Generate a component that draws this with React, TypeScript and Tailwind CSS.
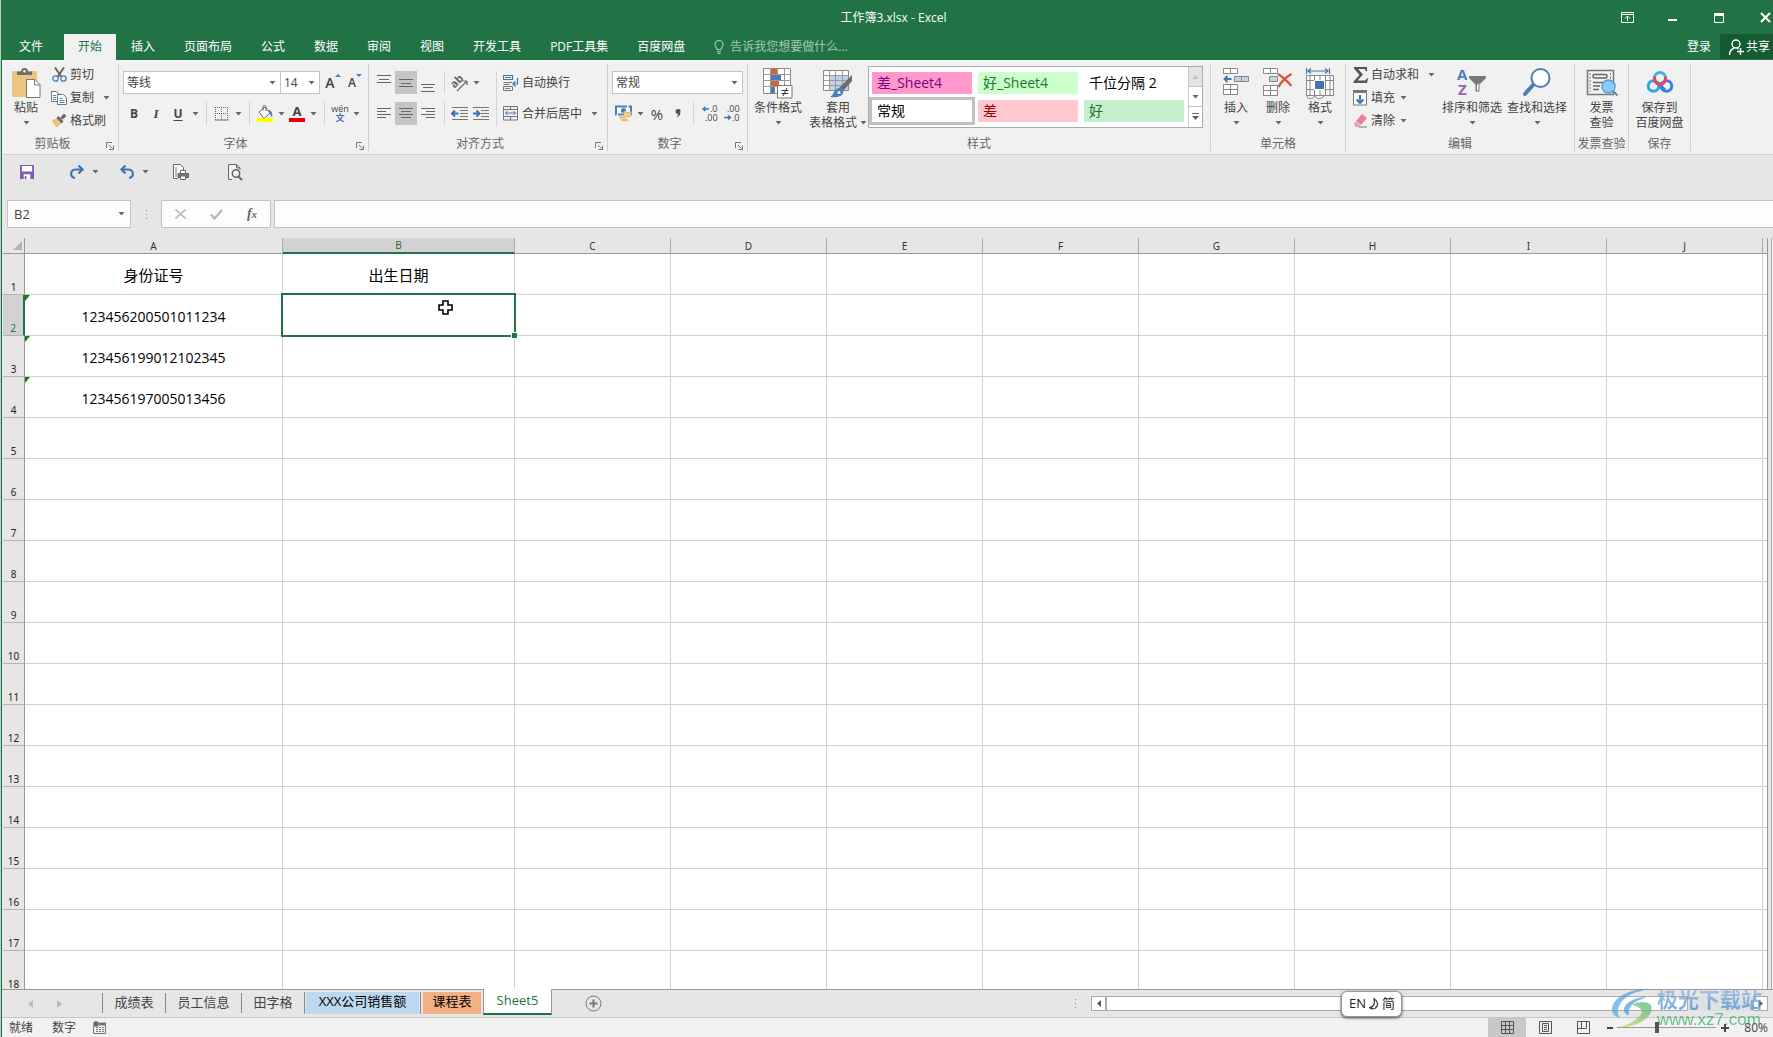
import { useState } from "react";
import type { ReactNode } from "react";

const TABS = ["插入", "页面布局", "公式", "数据", "审阅", "视图", "开发工具", "PDF工具集", "百度网盘"];
const STYLES = [
  { name: "差_Sheet4", cls: "bg-[#ff99cc] text-[#800080]" },
  { name: "好_Sheet4", cls: "bg-[#ccffcc] text-[#1a7a2a]" },
  { name: "千位分隔 2", cls: "bg-white text-black" },
  { name: "常规", cls: "bg-white text-black outline-[3px] outline-[#c0c0c0]" },
  { name: "差", cls: "bg-[#ffc7ce] text-[#9c0006]" },
  { name: "好", cls: "bg-[#c6efce] text-[#1f7030]" },
];
const COLS = ["A", "B", "C", "D", "E", "F", "G", "H", "I", "J"];
const ROWS = Array.from({ length: 18 }, (_, i) => i + 1);
const DATA: Record<string, string> = {
  A1: "身份证号", B1: "出生日期",
  A2: "123456200501011234", A3: "123456199012102345", A4: "123456197005013456",
};

const Arrow = () => (
  <svg width="7" height="4" viewBox="0 0 7 4" className="shrink-0"><path d="M0.5 0h6L3.5 3.5z" fill="#666" /></svg>
);

const Drop = ({ label }: { label: string }) => (
  <button aria-label={label} className="w-3 h-full flex items-center justify-center shrink-0"><Arrow /></button>
);

const Tool = ({ label, on, wide, children }: { label: string; on?: boolean; wide?: boolean; children: ReactNode }) => (
  <button aria-label={label} className={"h-full flex items-center justify-center shrink-0 " + (wide ? "w-[22px] " : "w-5 ") + (on ? "bg-[#c5c5c5]" : "")}>
    {children}
  </button>
);

const Sep = () => <div className="w-px h-full bg-[#d4d4d4] mx-[5px] shrink-0" />;

const Big = ({ label, icon, width, arrow }: { label: string[]; icon: ReactNode; width: string; arrow?: boolean }) => (
  <button className={"flex flex-col items-center pt-1 shrink-0 whitespace-nowrap " + width}>
    <span className="h-[30px] flex items-start justify-center">{icon}</span>
    <span className="mt-0.5 leading-[15px]">{label[0]}</span>
    <span className="h-[15px] leading-[15px] flex items-center gap-[3px]">
      {label[1]}
      {arrow && <Arrow />}
    </span>
  </button>
);

const Small = ({ label, icon }: { label: string; icon: ReactNode }) => (
  <button className="flex items-center gap-[3px] h-full px-0.5 whitespace-nowrap">
    <span className="w-4 flex justify-center">{icon}</span>
    {label}
  </button>
);

const Group = ({ label, width, launcher, children }: { label: string; width: string; launcher?: boolean; children: ReactNode }) => (
  <section aria-label={label} className={"h-[87px] my-1 border-r border-[#d0d0d0] flex flex-col justify-between shrink-0 " + width}>
    <div className="flex h-[70px]">{children}</div>
    <div className="flex h-[14px] leading-[14px] text-[#666]">
      <span className="flex-1 text-center whitespace-nowrap">{label}</span>
      {launcher && (
        <button aria-label={label + "设置"} className="w-4 flex items-end justify-center">
          <svg width="9" height="9" viewBox="0 0 9 9" fill="none" stroke="#777"><path d="M0.5 6V0.5H6M3 3l3.5 3.5M7.5 3.5v4h-4" /></svg>
        </button>
      )}
    </div>
  </section>
);

const Combo = ({ label, value, width }: { label: string; value: string; width: string }) => (
  <div className={"relative h-[23px] shrink-0 " + width}>
    <select aria-label={label} className="appearance-none w-full h-full bg-white border border-[#c3c3c3] pl-[3px] text-[#444] outline-none">
      <option>{value}</option>
    </select>
    <span className="absolute right-[5px] top-[10px] pointer-events-none"><Arrow /></span>
  </div>
);

const Lines = ({ d }: { d: string }) => (
  <svg width="16" height="20" viewBox="0 0 16 20" fill="none" stroke="#666"><path d={d} /></svg>
);

function PasteIcon() {
  return (
    <svg width="30" height="31" viewBox="0 0 30 31">
      <rect x="1" y="3" width="25" height="26" rx="1" fill="#ecc580" />
      <path d="M6 7V3.500h4a3.500 3.500 0 0 1 7 0h4V7z" fill="#6d6d6d" />
      <circle cx="13.500" cy="3.300" r="1.300" fill="#f1f1f1" />
      <path d="M15.500 11.500h8.500l5 5v13h-13.500z" fill="#fff" stroke="#777" />
      <path d="M23.500 11.500v5.500h5.500" fill="none" stroke="#777" />
    </svg>
  );
}

function CutIcon() {
  return (
    <svg width="15" height="15" viewBox="0 0 15 15" fill="none">
      <path d="M3 0.500l6.500 9.500M12 0.500L5.500 10" stroke="#666" strokeWidth="2" />
      <circle cx="3.500" cy="11.500" r="2.700" stroke="#4a7ebb" strokeWidth="1.300" />
      <circle cx="11.500" cy="11.500" r="2.700" stroke="#4a7ebb" strokeWidth="1.300" />
    </svg>
  );
}

function CopyIcon() {
  return (
    <svg width="16" height="14" viewBox="0 0 16 14" stroke="#777" fill="#fff">
      <path d="M0.500 0.500h5l2.500 2.500v7.500h-7.500z" />
      <path d="M6.500 3.500h6l3 3v7h-9z" />
      <path d="M2 4.500h3M2 6.500h3M2 8.500h3M8.500 7.500h3M8.500 9.500h5M8.500 11.500h5" stroke="#4a7ebb" fill="none" />
    </svg>
  );
}

function BrushIcon() {
  return (
    <svg width="16" height="15" viewBox="0 0 16 15">
      <path d="M1 7l5-1.500 4 5L6 14.500c-2-1-4-4-5-7.500z" fill="#ecc07c" />
      <path d="M5.500 5l2-2 5 5.500-2 2z" fill="#666" />
      <path d="M9.500 4.500L13 0.500l2.500 2.500-4 3.500z" fill="#666" />
    </svg>
  );
}

function BucketIcon() {
  return (
    <svg width="18" height="18" viewBox="0 0 18 18" fill="none">
      <path d="M3 7l6-5 5 6-6 5.500z" fill="#fff" stroke="#666" />
      <path d="M7 5.500V2a1.500 1.500 0 0 1 3 0v4" stroke="#666" />
      <path d="M12 5c3 0 5 2.500 4 7.500-1-2-2-3-2.500-4.500z" fill="#4a7ebb" />
      <rect x="1" y="13" width="16" height="4" fill="#ffff00" />
    </svg>
  );
}

function BordersIcon() {
  return (
    <svg width="14" height="14" viewBox="0 0 14 14" fill="none" stroke="#666">
      <path d="M0.500 0v13M6.500 0v13M12.500 0v13M0 0.500h13M0 6.500h13" strokeDasharray="1 1" />
      <path d="M0 13h13.500" />
    </svg>
  );
}

function OrientIcon() {
  return (
    <svg width="18" height="18" viewBox="0 0 18 18" fill="none" className="overflow-visible">
      <text x="0" y="12" transform="rotate(-45 5 9)" fontSize="11" fontWeight="bold" fill="#666" fontFamily="Open Sans">ab</text>
      <path d="M6 17L16 7M16 7v4M16 7h-4" stroke="#666" strokeWidth="1.200" />
    </svg>
  );
}

function IndentIcon({ right }: { right?: boolean }) {
  return (
    <svg width="18" height="15" viewBox="0 0 18 15" fill="none" stroke="#777">
      <path d="M1 1.500h16M9 4.500h8M9 7.500h8M9 10.500h8M1 13.500h16" />
      <path d={right ? "M1 7.500h6M4.500 4.500l3 3-3 3" : "M7.500 7.500h-6M4 4.500l-3 3 3 3"} stroke="#3f74b5" strokeWidth="2" />
    </svg>
  );
}

function WrapIcon() {
  return (
    <svg width="16" height="16" viewBox="0 0 16 16" fill="none" stroke="#777">
      <path d="M0.500 11.500h9v4h-9zM2 2.500h6M0.500 7.500h9M0.500 9.500h6M2 13.500h5" />
      <path d="M0.500 0.500h9v4h-9zM14.500 3v6h-4M12.500 6.500l-2.500 2.500 2.500 2.500" stroke="#3f74b5" strokeWidth="1.200" />
    </svg>
  );
}

function MergeIcon() {
  return (
    <svg width="16" height="15" viewBox="0 0 16 15" fill="none" stroke="#777">
      <path d="M0.500 0.500h14v13.500h-14zM0.500 3.500h14M0.500 10.500h14M7.500 0.500v3M7.500 10.500v3.500" />
      <path d="M2.500 7h10M4.500 5L2.500 7l2 2M10.500 5l2 2-2 2" stroke="#3f74b5" />
    </svg>
  );
}

function MoneyIcon() {
  return (
    <svg width="17" height="17" viewBox="0 0 17 17">
      <path d="M1 1.500h15v8H1z" fill="#fff" stroke="#4a7ebb" strokeWidth="2" strokeDasharray="11 1.500" />
      <circle cx="8.500" cy="5.500" r="2.500" fill="#4a7ebb" />
      <rect x="9" y="6.500" width="7" height="3" rx="1.200" fill="#ecb868" stroke="#f1f1f1" strokeWidth="0.600" />
      <rect x="9" y="9.500" width="7" height="3" rx="1.200" fill="#ecb868" stroke="#f1f1f1" strokeWidth="0.600" />
      <rect x="4" y="11" width="7" height="3" rx="1.200" fill="#ecb868" stroke="#f1f1f1" strokeWidth="0.600" />
      <rect x="6" y="13.500" width="7" height="3" rx="1.200" fill="#ecb868" stroke="#f1f1f1" strokeWidth="0.600" />
    </svg>
  );
}

function DecimalIcon({ less }: { less?: boolean }) {
  return (
    <svg width="17" height="17" viewBox="0 0 17 17" fill="none" className="overflow-visible">
      <text x={less ? "3" : "8"} y="7" fontSize="9" fill="#444" fontFamily="Open Sans">{less ? ".00" : ".0"}</text>
      <text x={less ? "8" : "3"} y="16" fontSize="9" fill="#444" fontFamily="Open Sans">{less ? ".0" : ".00"}</text>
      <path d={less ? "M0 12.500h6M4 10.500l2.500 2-2.500 2" : "M7 4H1.500M3.500 2L1 4l2.500 2"} stroke="#3f74b5" strokeWidth="1.500" />
    </svg>
  );
}

function CondIcon() {
  return (
    <svg width="30" height="31" viewBox="0 0 30 31">
      <path d="M0.500 0.500h27v25h-27z" fill="#fff" stroke="#888" />
      <path d="M7.500 0v25M14.500 0v25M21.500 0v25M0 6.500h28M0 12.500h28M0 18.500h28" stroke="#999" />
      <path d="M8 1h6v5H8zM8 13h8v5H8z" fill="#d9603f" />
      <path d="M8 7h10v5H8zM8 19h4v6H8z" fill="#4a7ebb" />
      <path d="M14.500 17.500h14.500v12.500h-14.500z" fill="#fff" stroke="#777" />
      <path d="M18.500 22.500h7M18.500 25.500h7M24 20l-4 8" stroke="#333" />
    </svg>
  );
}

function TableStyleIcon() {
  return (
    <svg width="30" height="30" viewBox="0 0 30 30">
      <path d="M0.500 2.500h25v20h-25z" fill="#fff" stroke="#888" />
      <path d="M7 8h18v14H7z" fill="#bcd2e8" />
      <path d="M6.500 2v21M12.500 2v21M19.500 2v21M0 7.500h25M0 12.500h25M0 17.500h25" stroke="#999" />
      <path d="M29 7v6l-9 10-4-3z" fill="#6d6d6d" />
      <path d="M16 20c3 0 5 2 4 5s-5 5-13 4c4-1 3-8 9-9z" fill="#4a7ebb" />
      <circle cx="16" cy="24.500" r="1.500" fill="#fff" />
    </svg>
  );
}

function InsertIcon() {
  return (
    <svg width="27" height="28" viewBox="0 0 27 28" fill="#fff" stroke="#888">
      <path d="M0.500 0.500h14v5h-14zM7.500 0.500v5M0.500 16.500h14v10h-14zM7.500 16.500v10M0.500 21.500h14" />
      <path d="M11.500 8.500h14v5h-14z" fill="#c3d3e2" /><path d="M18.500 8.500v5" />
      <path d="M8.500 11H2M4.500 8L1.500 11l3 3" fill="none" stroke="#3f74b5" strokeWidth="1.800" />
    </svg>
  );
}

function DeleteIcon() {
  return (
    <svg width="30" height="28" viewBox="0 0 30 28" fill="#fff" stroke="#888">
      <path d="M0.500 0.500h14v5h-14zM7.500 0.500v5M0.500 17.500h14v10h-14zM7.500 17.500v10M0.500 22.500h14" />
      <path d="M6.500 8.500h8v5h-8z" fill="#c3d3e2" />
      <path d="M15 6c5 3 9 7 13.500 12M28.500 6c-5 3-10 7-13 13" fill="none" stroke="#d9503f" strokeWidth="2.200" />
    </svg>
  );
}

function FormatIcon() {
  return (
    <svg width="29" height="32" viewBox="0 0 29 32" fill="#fff" stroke="#888">
      <path d="M0.500 7.500h27v20h-27z" />
      <path d="M8.500 7v20M19.500 7v20M0 12.500h28M0 21.500h28M14 7v5M14 22v5M24 7v20M4 7v20" />
      <path d="M8.500 12.500h10v9h-10z" fill="#3f74b5" stroke="#fff" />
      <path d="M1 28c0 4 6 3 8 0 2 4 7 3 9 0" fill="none" />
      <path d="M0.500 0v6M23.500 0v6M2 3h20M5 0.500L2 3l3 2.500M19 0.500L22 3l-3 2.500" fill="none" stroke="#3f74b5" strokeWidth="1.200" />
    </svg>
  );
}

function SortIcon() {
  return (
    <svg width="30" height="30" viewBox="0 0 30 30" className="overflow-visible">
      <text x="0" y="12" fontSize="15" fontWeight="bold" fill="#4a7ebb" fontFamily="Open Sans">A</text>
      <text x="1" y="27" fontSize="15" fontWeight="bold" fill="#9660b4" fontFamily="Open Sans">Z</text>
      <path d="M12 8h17v2l-6.500 6.500v7h-4v-7L12 10z" fill="#777" />
      <path d="M20 17v5.500h1.500V16l3-3z" fill="#fff" />
    </svg>
  );
}

function FindIcon() {
  return (
    <svg width="28" height="29" viewBox="0 0 28 29" fill="none">
      <path d="M11 16L2 26" stroke="#4a7ebb" strokeWidth="4" strokeLinecap="round" />
      <circle cx="17.500" cy="10" r="9" fill="#fff" stroke="#4a7ebb" strokeWidth="2" />
    </svg>
  );
}

function InvoiceIcon() {
  return (
    <svg width="32" height="29" viewBox="0 0 32 29" fill="none">
      <path d="M1.500 2.500h26v24h-26z" fill="#f4f4f4" stroke="#777" strokeWidth="1.500" />
      <rect x="7" y="6.500" width="14" height="3.500" rx="1.500" stroke="#666" strokeWidth="1.500" />
      <path d="M7 14.500h10M7 18h7M7 21.500h6" stroke="#666" strokeWidth="1.500" />
      <path d="M4 5v19M24.500 5v6" stroke="#777" strokeDasharray="2 1.500" />
      <circle cx="22.500" cy="18.500" r="6.500" fill="#90c8f8" stroke="#5a9bd8" strokeWidth="1.500" />
      <path d="M27.500 23.500l4 4" stroke="#4a8fd0" strokeWidth="2" />
    </svg>
  );
}

function BaiduIcon() {
  return (
    <svg width="28" height="26" viewBox="0 0 28 26" fill="none">
      <circle cx="7.500" cy="18" r="5.300" stroke="#2aa7e8" strokeWidth="3" />
      <circle cx="20.500" cy="18" r="5.300" stroke="#2f7fe6" strokeWidth="3" />
      <path d="M11 14l8 8" stroke="#2f7fe6" strokeWidth="3" />
      <circle cx="14" cy="10" r="5.500" stroke="#33b5e8" strokeWidth="3" />
      <path d="M9 8.500a5.500 5.500 0 1 0 10 0" stroke="#ee4466" strokeWidth="3" />
      <circle cx="14" cy="10" r="3.500" fill="#f3f3f3" />
    </svg>
  );
}

function SwirlLogo() {
  return (
    <svg width="44" height="40" viewBox="0 0 44 40">
      <defs>
        <linearGradient id="swirlTop" x1="1" y1="0" x2="0" y2="1"><stop offset="0" stopColor="#3d9be0" /><stop offset="1" stopColor="#5aa9e2" /></linearGradient>
        <linearGradient id="swirlLow" x1="1" y1="0" x2="0" y2="1"><stop offset="0" stopColor="#44b077" /><stop offset="1" stopColor="#d5e05a" /></linearGradient>
      </defs>
      <path d="M38 1C22 0 3 8 1 20c-1 5 3 9 8 10-4-5-2-13 4-19S29 3 38 1z" fill="url(#swirlTop)" />
      <path d="M35 9c-9 0-22 5-22 13 0 3 2 5 5 5-1-4 1-9 5-12s9-4 12-6z" fill="#4a9bdc" />
      <path d="M21 17c5-4 15-4 19 0 4 12-16 24-34 22 9-1 21-7 24-13 2-4-2-8-9-9z" fill="url(#swirlLow)" />
    </svg>
  );
}

function TitleBar() {
  return (
    <header className="bg-[#217346] text-white">
      <div className="grid grid-cols-[1fr_auto_1fr] items-center h-[35px] -mb-px pl-3">
        <h1 className="col-start-2">工作簿3.xlsx - Excel</h1>
        <div className="justify-self-end flex h-[33px] -mr-[15px]">
          <button aria-label="功能区显示选项" className="w-[46px] flex items-center justify-center">
            <svg width="13" height="11" viewBox="0 0 13 11" fill="none" stroke="#fff"><path d="M0.500 0.500h12v10h-12zM0.500 2.500h12M6.500 9V4.500M4 6.500l2.500-2.500L9 6.500" /></svg>
          </button>
          <button aria-label="最小化" className="w-[46px] flex items-center justify-center">
            <svg width="10" height="11" viewBox="0 0 10 11"><path d="M0 7h9v2H0z" fill="#fff" /></svg>
          </button>
          <button aria-label="最大化" className="w-[46px] flex items-center justify-center">
            <svg width="10" height="10" viewBox="0 0 10 10" fill="none" stroke="#fff"><path d="M0.500 0.500h9v9h-9zM0 1.500h10M0 2.500h10" /></svg>
          </button>
          <button aria-label="关闭" className="w-[46px] flex items-center justify-center">
            <svg width="11" height="11" viewBox="0 0 11 11" fill="none" stroke="#fff" strokeWidth="2"><path d="M1 1l9 9M10 1l-9 9" /></svg>
          </button>
        </div>
      </div>
      <nav className="relative flex h-[26px] gap-px whitespace-nowrap">
        <button className="w-[58px] mr-[3px] text-center">文件</button>
        <button className="px-3.5 bg-[#f1f1f1] text-[#217346]">开始</button>
        {TABS.map(t => <button key={t} className="px-3.5">{t}</button>)}
        <label className="flex items-center gap-1.5 pl-[14px] text-[#a3c7b2]">
          <svg width="10" height="14" viewBox="0 0 10 14" fill="none" stroke="#a3c7b2" strokeWidth="1.200"><path d="M3 9.500C3 7.500 1 7 1 4.500a4 4 0 0 1 8 0C9 7 7 7.500 7 9.500zM3 11.500h4M3.500 13.300h3" /></svg>
          <input aria-label="告诉我您想要做什么" placeholder="告诉我您想要做什么..." className="w-40 bg-transparent outline-none placeholder:text-[#a3c7b2]" />
        </label>
        <div className="flex-1" />
        <button className="px-2">登录</button>
        <button className="bg-[#155a33] h-[25px] pl-2 pr-[3px] flex items-center gap-0.5">
          <svg width="16" height="18" viewBox="0 0 16 18" fill="none" stroke="#fff" strokeWidth="1.400"><circle cx="8" cy="6" r="4" /><path d="M1.500 17c0-4 2-6 5-7M9 10l1.500 1M12.500 10v7M9 13.500h7" /></svg>
          共享
        </button>
      </nav>
    </header>
  );
}

function Ribbon() {
  return (
    <div className="flex h-[95px] bg-[#f1f1f1] border-b border-[#d0d0d0] pl-px text-[#444]">
      <Group label="剪贴板" width="w-[116px]" launcher>
        <Big label={["粘贴"]} icon={<PasteIcon />} width="w-[46px]" arrow />
        <div className="grid grid-rows-3 gap-0.5 h-[67px]">
          <div className="flex"><Small label="剪切" icon={<CutIcon />} /></div>
          <div className="flex gap-1"><Small label="复制" icon={<CopyIcon />} /><Drop label="复制选项" /></div>
          <div className="flex"><Small label="格式刷" icon={<BrushIcon />} /></div>
        </div>
      </Group>

      <Group label="字体" width="w-[250px]" launcher>
        <div className="flex flex-col gap-2 pt-[7px] pl-1">
          <div className="flex h-[23px]">
            <Combo label="字体" value="等线" width="w-[158px]" />
            <Combo label="字号" value="14" width="w-[40px] -ml-px mr-0.5" />
            <Tool label="增大字号" wide><span className="text-sm font-semibold">A</span><span className="self-start"><svg width="6" height="10" viewBox="0 0 6 10"><path d="M0 6h6L3 3z" fill="#4a7ebb" /></svg></span></Tool>
            <Tool label="减小字号" wide><span className="text-xs font-semibold">A</span><span className="self-start"><svg width="6" height="10" viewBox="0 0 6 10"><path d="M0 3h6L3 6z" fill="#4a7ebb" /></svg></span></Tool>
          </div>
          <div className="flex h-[23px]">
            <Tool label="加粗" wide><b className="text-xs">B</b></Tool>
            <Tool label="倾斜" wide><i className="text-[13px] font-bold font-['Liberation_Serif',serif]">I</i></Tool>
            <Tool label="下划线" wide><b className="text-xs underline underline-offset-2">U</b></Tool>
            <Drop label="下划线选项" /><Sep />
            <Tool label="边框"><BordersIcon /></Tool><Drop label="边框选项" /><Sep />
            <Tool label="填充颜色"><BucketIcon /></Tool><Drop label="填充颜色选项" />
            <Tool label="字体颜色">
              <span className="w-4 border-b-4 border-[#e60000] text-[13px] leading-[13px] font-bold text-center">A</span>
            </Tool>
            <Drop label="字体颜色选项" /><Sep />
            <Tool label="拼音"><span className="flex flex-col items-center text-[9px] leading-[9px]">wén<span className="text-[9px] leading-[10px] font-bold text-[#3f74b5]">文</span></span></Tool>
            <Drop label="拼音选项" />
          </div>
        </div>
      </Group>

      <Group label="对齐方式" width="w-[239px]" launcher>
        <div className="flex flex-col gap-2 pt-[7px] pl-1 w-[127px]">
          <div className="flex h-[23px]">
            <Tool label="顶端对齐" wide><Lines d="M1 2.500h14M3 6.500h10M1 9.500h14" /></Tool>
            <Tool label="垂直居中" wide on><Lines d="M1 6.500h14M3 10.500h10M1 13.500h14" /></Tool>
            <Tool label="底端对齐" wide><Lines d="M1 11.500h14M3 14.500h10M1 18.500h14" /></Tool>
            <Sep />
            <Tool label="方向"><OrientIcon /></Tool><Drop label="方向选项" />
          </div>
          <div className="flex h-[23px]">
            <Tool label="左对齐" wide><Lines d="M1 4.500h14M1 7.500h9M1 10.500h14M1 13.500h9" /></Tool>
            <Tool label="居中" wide on><Lines d="M1 4.500h14M3 7.500h10M1 10.500h14M3 13.500h10" /></Tool>
            <Tool label="右对齐" wide><Lines d="M1 4.500h14M6 7.500h9M1 10.500h14M6 13.500h9" /></Tool>
            <Sep />
            <Tool label="减少缩进量"><IndentIcon /></Tool>
            <Tool label="增加缩进量" wide><IndentIcon right /></Tool>
          </div>
        </div>
        <div className="w-px h-[55px] mt-[7px] bg-[#d4d4d4]" />
        <div className="flex flex-col gap-2 pt-[7px] pl-1">
          <div className="flex h-[23px]"><Small label="自动换行" icon={<WrapIcon />} /></div>
          <div className="flex gap-1 h-[23px]"><Small label="合并后居中" icon={<MergeIcon />} /><Drop label="合并选项" /></div>
        </div>
      </Group>

      <Group label="数字" width="w-[140px]" launcher>
        <div className="flex flex-col gap-2 pt-[7px] pl-1">
          <Combo label="数字格式" value="常规" width="w-[131px]" />
          <div className="flex h-[23px]">
            <Tool label="会计数字格式" wide><MoneyIcon /></Tool><Drop label="货币选项" />
            <Tool label="百分比样式" wide><span className="text-[15px]">%</span></Tool>
            <Tool label="千位分隔样式">
              <svg width="6" height="9" viewBox="0 0 6 9"><path d="M3 0a2.300 2.300 0 0 1 2.500 2.500C5.500 5.500 4 8 1.500 8.500 2.500 7.500 3 6.500 3 5A2.500 2.500 0 0 1 3 0z" fill="#555" /></svg>
            </Tool>
            <Sep />
            <Tool label="增加小数位数" wide><DecimalIcon /></Tool>
            <Tool label="减少小数位数" wide><DecimalIcon less /></Tool>
          </div>
        </div>
      </Group>

      <Group label="样式" width="w-[463px]">
        <Big label={["条件格式"]} icon={<CondIcon />} width="w-[60px]" arrow />
        <Big label={["套用", "表格格式"]} icon={<TableStyleIcon />} width="w-[60px]" arrow />
        <div className="flex mt-0.5 h-[62px] bg-white border border-[#ababab]">
          <div className="grid grid-cols-3 gap-1.5 pl-[3px] pr-1 pt-[5px] content-start">
            {STYLES.map(s => (
              <button key={s.name} className={"w-[100px] h-[22px] pl-[5px] text-left text-sm leading-[22px] " + s.cls}>{s.name}</button>
            ))}
          </div>
          <div className="w-[14px] grid grid-rows-3 border-l border-[#c6c6c6] divide-y divide-[#c6c6c6]">
            <button aria-label="上一行" className="flex items-center justify-center bg-[#e3e3e3]"><svg width="7" height="4" viewBox="0 0 7 4"><path d="M0.500 4h6L3.500 0.500z" fill="#bbb" /></svg></button>
            <button aria-label="下一行" className="flex items-center justify-center"><Arrow /></button>
            <button aria-label="其他样式" className="flex items-center justify-center"><svg width="7" height="8" viewBox="0 0 7 8"><path d="M0 0h7v1H0zM0 3h7L3.500 7z" fill="#666" /></svg></button>
          </div>
        </div>
      </Group>

      <Group label="单元格" width="w-[135px]">
        <div className="w-1" />
        <Big label={["插入"]} icon={<InsertIcon />} width="w-[42px]" arrow />
        <Big label={["删除"]} icon={<DeleteIcon />} width="w-[42px]" arrow />
        <Big label={["格式"]} icon={<FormatIcon />} width="w-[42px]" arrow />
      </Group>

      <Group label="编辑" width="w-[229px]">
        <div className="grid grid-rows-3 gap-0.5 h-[67px] w-[94px] pl-1">
          <div className="flex gap-1">
            <Small label="自动求和" icon={<svg width="15" height="16" viewBox="0 0 15 16"><path d="M1 0h13v4h-1.500c0-1.500-.5-2-2-2H5l5 5.500L4.500 13.500H11c1.500 0 2-.5 2.500-2H15L14 16H0.500v-1.500L6.500 8 1 1.500z" fill="#555" /></svg>} />
            <Drop label="求和选项" />
          </div>
          <div className="flex">
            <Small label="填充" icon={<svg width="14" height="16" viewBox="0 0 14 16" fill="none"><path d="M0.500 0.500h13v14.500h-13z" fill="#fff" stroke="#777" /><path d="M0 0h14v3H0z" fill="#777" /><path d="M7 5v8M3.500 9.500L7 13l3.500-3.500" stroke="#3f74b5" strokeWidth="2" /></svg>} />
            <Drop label="填充选项" />
          </div>
          <div className="flex">
            <Small label="清除" icon={<svg width="15" height="14" viewBox="0 0 15 14"><path d="M9 0l5 4-6 7-5-4z" fill="#e8829a" /><path d="M2.500 7.500l5 4L6 13H3L1 10.500z" fill="#e8a0b0" /><path d="M6 13h8" stroke="#777" /></svg>} />
            <Drop label="清除选项" />
          </div>
        </div>
        <Big label={["排序和筛选"]} icon={<SortIcon />} width="w-[64px]" arrow />
        <Big label={["查找和选择"]} icon={<FindIcon />} width="w-[66px]" arrow />
      </Group>

      <Group label="发票查验" width="w-[54px]">
        <Big label={["发票", "查验"]} icon={<InvoiceIcon />} width="w-[53px]" />
      </Group>
      <Group label="保存" width="w-[62px]">
        <Big label={["保存到", "百度网盘"]} icon={<BaiduIcon />} width="w-[61px]" />
      </Group>
    </div>
  );
}

function QuickAccess() {
  return (
    <div className="flex items-center h-[34px] pl-[13px]">
      <button aria-label="保存" className="w-6 flex justify-center">
        <svg width="14" height="14" viewBox="0 0 15 15"><path d="M0 0h15v15H0z" fill="#8458b3" /><path d="M2 1h11v6H2zM4 10h7v5H4z" fill="#fff" /><path d="M5 12h2v3H5z" fill="#8458b3" /></svg>
      </button>
      <button aria-label="恢复" className="w-6 ml-[26px] flex justify-center">
        <svg width="16" height="14" viewBox="0 0 16 14" fill="none" stroke="#3f74b5" strokeWidth="2.200"><path d="M13.500 4.500H7c-6 0-6.500 7.500-1 8.500M9.500 0.500l4 4-4 4" /></svg>
      </button>
      <Drop label="恢复选项" />
      <button aria-label="撤消" className="w-6 ml-[14px] flex justify-center">
        <svg width="16" height="14" viewBox="0 0 16 14" fill="none" stroke="#3f74b5" strokeWidth="2.200"><path d="M2.500 4.500H9c6 0 6.500 7.500 1 8.500M6.500 0.500l-4 4 4 4" /></svg>
      </button>
      <Drop label="撤消选项" />
      <button aria-label="快速打印" className="w-6 ml-[18px] flex justify-center">
        <svg width="17" height="16" viewBox="0 0 17 16" fill="#fff" stroke="#666"><path d="M5 14.500H0.500v-14h7l3 3V6" /><path d="M3 3v10" stroke="#4a7ebb" /><path d="M7.500 6.500h5V10h-5z" /><path d="M5 9.500h10.500v4H5z" fill="#777" /><path d="M7.500 12h5v3.500h-5z" /></svg>
      </button>
      <button aria-label="打印预览" className="w-6 ml-[30px] flex justify-center">
        <svg width="15" height="17" viewBox="0 0 15 17" fill="none" stroke="#666"><path d="M4 15.500H0.500v-15h8l3.500 3.500v2M8.500 0.500V4H12" fill="#f4f4f4" /><circle cx="8" cy="9.500" r="3.700" strokeWidth="1.500" /><path d="M10.500 12.500L14 16" strokeWidth="2" /></svg>
      </button>
    </div>
  );
}

function FormulaBar({ cell }: { cell: string }) {
  return (
    <div className="flex h-7 mt-[11px] pl-[5px]">
      <div className="relative w-[124px]">
        <input aria-label="名称框" defaultValue={cell} className="w-full h-full bg-[#fdfdfd] border border-[#c3c3c3] pl-1.5 text-[13px] text-[#444] outline-none" />
        <span className="absolute right-[6px] top-3 pointer-events-none"><Arrow /></span>
      </div>
      <div className="w-[30px] flex flex-col items-center justify-center gap-[3px]">
        <i className="size-px bg-[#888]" /><i className="size-px bg-[#888]" /><i className="size-px bg-[#888]" />
      </div>
      <div className="flex w-[110px] bg-[#fdfdfd] border border-[#c3c3c3]">
        <button aria-label="取消" className="w-9 flex items-center justify-center"><svg width="11" height="10" viewBox="0 0 11 10" stroke="#bbb" strokeWidth="1.600"><path d="M0.500 0.500l10 9M10.500 0.500l-10 9" /></svg></button>
        <button aria-label="输入" className="w-9 flex items-center justify-center"><svg width="13" height="11" viewBox="0 0 13 11" fill="none" stroke="#b5b5b5" strokeWidth="2.200"><path d="M1 5.500L4.500 9.500L12 1" /></svg></button>
        <button aria-label="插入函数" className="w-9 text-sm font-bold italic text-[#666] font-['Liberation_Serif',serif]">f<span className="text-[11px]">x</span></button>
      </div>
      <input aria-label="编辑栏" className="flex-1 ml-[3px] bg-[#fdfdfd] border-y border-l border-[#c3c3c3] px-1 outline-none" />
    </div>
  );
}

function Grid() {
  return (
    <div className="flex flex-1 min-h-0 mt-[10px] pl-px">
      <div className="flex-1 min-w-0 overflow-hidden border-r border-[#999]">
        <table className="table-fixed w-full border-separate border-spacing-0 bg-white">
          <colgroup>
            <col className="w-[22px]" />
            <col className="w-[258px]" />
            <col className="w-[232px]" />
            {COLS.slice(2).map(c => <col key={c} className="w-[156px]" />)}
            <col />
          </colgroup>
          <thead>
            <tr className="h-4 text-[10px] leading-[13px] text-[#333] font-['Noto_Sans',sans-serif]">
              <th className="bg-[#e6e6e6] border-r border-b border-[#999] p-0">
                <svg width="9" height="9" viewBox="0 0 9 9" className="ml-auto mr-0.5"><path d="M9 0v9H0z" fill="#b4b4b4" /></svg>
              </th>
              {COLS.map(c => (
                <th key={c} className={"p-0 pt-px font-normal border-r " + (c === "B" ? "bg-[#d2d2d2] text-[#217346] border-r-[#ababab] border-b-2 border-b-[#217346]" : "bg-[#e6e6e6] border-r-[#ababab] border-b border-b-[#999]")}>{c}</th>
              ))}
              <th className="bg-[#e6e6e6] border-b border-[#999] p-0" />
            </tr>
          </thead>
          <tbody>
            {ROWS.map(r => (
              <tr key={r} className="h-[41px]">
                <th className={"p-0 align-bottom border-b border-b-[#b4b4b4] font-normal text-[10px] leading-[13px] font-['Noto_Sans',sans-serif] " + (r === 2 ? "bg-[#d2d2d2] text-[#217346] border-r-2 border-r-[#217346]" : "bg-[#e6e6e6] text-[#222] border-r border-r-[#999]")}>{r}</th>
                {COLS.map(c => {
                  const v = DATA[c + r];
                  return (
                    <td key={c} className={"relative p-0 text-center text-black border-r border-b border-[#d0d0d0] " + (r === 1 ? "pt-0.5 text-[15px]" : "pt-[3px] text-sm")}>
                      {v}
                      {c === "A" && r > 1 && v && (
                        <svg width="5" height="6" viewBox="0 0 5 6" className="absolute left-0 top-0"><path d="M0 0h5L0 6z" fill="#107c10" /></svg>
                      )}
                      {c === "B" && r === 2 && (
                        <div className="absolute -inset-[2px] border-2 border-[#217346] z-10">
                          <i className="absolute -right-[3px] -bottom-[3px] size-[6px] bg-[#217346] border-l border-t border-white" />
                        </div>
                      )}
                      {c === "B" && r === 2 && (
                        <svg width="15" height="15" viewBox="0 0 15 15" className="absolute left-[155px] top-[5px] z-20">
                          <path d="M5 1h5v4h4v5h-4v4H5v-4H1V5h4z" fill="#fff" stroke="#000" strokeWidth="1.600" />
                        </svg>
                      )}
                    </td>
                  );
                })}
                <td className="border-b border-[#d0d0d0] p-0" />
              </tr>
            ))}
          </tbody>
        </table>
      </div>
      <div className="w-[5px] pl-[3px]"><div className="h-full bg-[#f4f4f4] border-l border-[#ababab]" /></div>
    </div>
  );
}

function SheetBar() {
  return (
    <div className="flex h-7 border-t border-[#999] text-[13px] text-[#444] whitespace-nowrap">
      <div className="flex items-center gap-6 w-[100px] pl-[26px] shrink-0">
        <button aria-label="上一张"><svg width="5" height="8" viewBox="0 0 5 8"><path d="M5 0v8L0 4z" fill="#bbb" /></svg></button>
        <button aria-label="下一张"><svg width="5" height="8" viewBox="0 0 5 8"><path d="M0 0v8l5-4z" fill="#bbb" /></svg></button>
      </div>
      <div className="flex items-start">
        <button className="w-[63px] mt-[3px] h-5 pb-0.5 border-l border-[#888] leading-[18px]">成绩表</button>
        <button className="w-[76px] mt-[3px] h-5 pb-0.5 border-l border-[#888] leading-[18px]">员工信息</button>
        <button className="w-[63px] mt-[3px] h-5 pb-0.5 border-l border-[#888] leading-[18px]">田字格</button>
        <div className="mt-0.5 w-[117px] border-x border-[#888] px-px">
          <button className="w-full h-[22px] pb-1 bg-[#bdd7ee] text-black leading-[18px]">XXX公司销售额</button>
        </div>
        <button className="mt-0.5 mx-0.5 w-[58px] h-[22px] pb-1 bg-[#f4b084] text-black leading-[18px]">课程表</button>
        <button className="-mt-px w-[69px] h-[26px] bg-white border-x border-x-[#999] border-b-2 border-b-[#217346] text-[#217346]">Sheet5</button>
      </div>
      <button aria-label="新工作表" className="ml-[33px] self-center">
        <svg width="17" height="17" viewBox="0 0 17 17" fill="none" stroke="#777"><circle cx="8.500" cy="8.500" r="7.500" /><path d="M8.500 4.500v8M4.500 8.500h8" strokeWidth="2" /></svg>
      </button>
      <div className="flex-1" />
      <div className="flex flex-col items-center justify-center gap-[3px] w-8 shrink-0">
        <i className="size-px bg-[#888]" /><i className="size-px bg-[#888]" /><i className="size-px bg-[#888]" />
      </div>
      <div className="relative flex items-center w-[677px] mr-[5px]">
        <button aria-label="向左滚动" className="w-[15px] h-[15px] bg-white border border-[#ababab] flex items-center justify-center"><svg width="4" height="7" viewBox="0 0 4 7"><path d="M4 0v7L0 3.500z" fill="#555" /></svg></button>
        <div className="flex-1 h-[15px] bg-[#e0e0e0]"><div className="w-[90%] h-full bg-white border border-[#ababab]" /></div>
        <button aria-label="向右滚动" className="w-[15px] h-[15px] bg-white border border-[#ababab] flex items-center justify-center"><svg width="4" height="7" viewBox="0 0 4 7"><path d="M0 0v7l4-3.500z" fill="#555" /></svg></button>
        <div className="absolute left-[37%] top-px h-[26px] w-[61px] rounded-md bg-white border border-[#999] shadow-[0_1px_3px_#444] flex items-center justify-center gap-[3px] text-[#222] z-10">
          EN
          <svg width="10" height="12" viewBox="0 0 10 12" fill="none" stroke="#333" strokeWidth="1.200"><path d="M5 0.800c4 2 5 7 1 9.500-2 1-4 .7-5.500-.8C4 9.500 6.500 6 5 0.800z" /></svg>
          简
        </div>
      </div>
    </div>
  );
}

function StatusBar() {
  const [zoom, setZoom] = useState(40);
  return (
    <footer className="flex items-center h-5 bg-[#f1f1f1] border-t border-[#c6c6c6] text-[#444] pl-[7px] pr-[5px]">
      <span>就绪</span>
      <span className="ml-[19px]">数字</span>
      <button aria-label="录制宏" className="ml-[17px]">
        <svg width="13" height="13" viewBox="0 0 13 13" fill="none" stroke="#777"><path d="M0.500 5v7.500h12V2.500H6" /><path d="M6 2h7v2H6z" fill="#777" /><path d="M3 6.500h8M3 8.500h8M3 10.500h8" strokeDasharray="2 1" /><circle cx="3" cy="3" r="2.700" fill="#666" stroke="none" /></svg>
      </button>
      <div className="flex-1" />
      <button aria-label="普通视图" className="w-[38px] h-5 bg-[#c8c8c8] flex items-center justify-center">
        <svg width="13" height="13" viewBox="0 0 13 13" fill="none" stroke="#555"><path d="M0.500 0.500h12v12h-12zM4.500 0v13M8.500 0v13M0 4.500h13M0 8.500h13" /></svg>
      </button>
      <button aria-label="页面布局视图" className="w-[38px] h-5 flex items-center justify-center">
        <svg width="13" height="13" viewBox="0 0 13 13" fill="none" stroke="#555"><path d="M0.500 0.500h12v12h-12zM3.500 2.500h6v8h-6zM5 4.500h3M5 6.500h3M5 8.500h3" /></svg>
      </button>
      <button aria-label="分页预览" className="w-[38px] h-5 flex items-center justify-center">
        <svg width="13" height="13" viewBox="0 0 13 13" fill="none" stroke="#555"><path d="M0.500 0.500h12v12h-12zM4.500 0v7.500h5V0M0 7.500h5" /></svg>
      </button>
      <button aria-label="缩小" className="w-[15px] flex justify-center"><i className="w-1.5 h-0.5 bg-[#444]" /></button>
      <input
        type="range"
        aria-label="显示比例"
        value={zoom}
        onChange={e => setZoom(Number(e.target.value))}
        className="appearance-none w-[99px] h-px bg-[#999] [&::-webkit-slider-thumb]:appearance-none [&::-webkit-slider-thumb]:w-1 [&::-webkit-slider-thumb]:h-[11px] [&::-webkit-slider-thumb]:bg-[#555]"
      />
      <button aria-label="放大" className="w-[18px] flex justify-center"><svg width="8" height="8" viewBox="0 0 8 8" stroke="#444" strokeWidth="2"><path d="M4 0v8M0 4h8" /></svg></button>
      <span className="w-[34px] text-right">80%</span>
    </footer>
  );
}

export default function App() {
  return (
    <div className="relative h-screen overflow-hidden flex flex-col bg-[#e6e6e6] border-l border-[#b8cfc1] text-xs font-['Open_Sans','Noto_Sans_CJK_SC',sans-serif]">
      <div className="flex-1 min-h-0 flex flex-col border-l border-[#217346]">
        <TitleBar />
        <Ribbon />
        <QuickAccess />
        <FormulaBar cell="B2" />
        <Grid />
        <SheetBar />
        <StatusBar />
      </div>
      <div className="absolute right-[11px] bottom-2 flex items-center gap-0.5 pointer-events-none z-20 opacity-70">
        <SwirlLogo />
        <div className="flex flex-col whitespace-nowrap">
          <span className="text-[21px] leading-[24px] font-bold text-transparent bg-clip-text bg-linear-to-b from-[#8fb8e6] to-[#3c86d0]">极光下载站</span>
          <span className="text-[17px] leading-[18px] text-[#2fae62] font-['Liberation_Sans',sans-serif]">www.xz7.com</span>
        </div>
      </div>
    </div>
  );
}
